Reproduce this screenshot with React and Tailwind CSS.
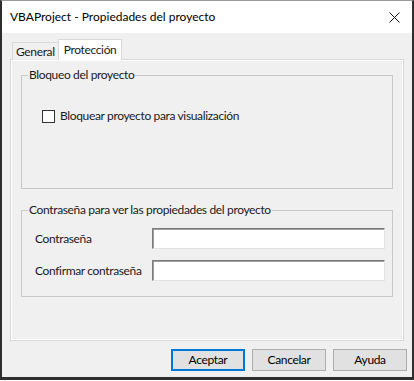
import React from 'react';

const font = { fontFamily: 'Lato, "Noto Sans", "Liberation Sans", sans-serif' };

const Field = ({ label }) => (
  <div className="flex items-center">
    <span className="w-[117px] ml-[7px] text-[12px] tracking-[-0.35px] whitespace-nowrap text-[#1a1a1a]">{label}</span>
    <div className="flex-1 mr-[1px] h-[21px] bg-white border border-t-[#7a7a7a] border-l-[#7a7a7a] border-r-[#e3e3e3] border-b-[#e3e3e3] shadow-[inset_1px_1px_0_#a0a0a0]" />
  </div>
);

const Button = ({ children, primary }) => (
  <button
    className={
      primary
        ? 'w-[74px] h-[22px] bg-[#e1e1e1] border-2 border-[#0078d7] text-[12px] tracking-[-0.35px] text-black'
        : 'w-[74px] h-[22px] bg-[#e1e1e1] border border-[#adadad] text-[12px] tracking-[-0.35px] text-black'
    }
  >
    {children}
  </button>
);

export default function App() {
  return (
    <div style={font} className="w-[414px] h-[381px] bg-white">
      <div className="w-[414px] h-[380px] flex flex-col border-x-2 border-b-[3px] border-t border-[#2e2e2e] border-t-[#9a9a9a] bg-[#f0f0f0]">
        {/* title bar */}
        <div className="h-[32px] bg-white flex items-center justify-between pl-[8px] pr-[12px]">
          <span className="text-[12px] text-black">VBAProject - Propiedades del proyecto</span>
          <svg width="11" height="11" viewBox="0 0 11 11">
            <path d="M0.5 0.5 L10.5 10.5 M10.5 0.5 L0.5 10.5" stroke="#111" strokeWidth="1" />
          </svg>
        </div>

        <div className="flex flex-col px-[8px] pt-[5px]">
          {/* tabs */}
          <div className="flex items-end h-[21px] pl-[2px] relative z-10">
            <div className="h-[18px] px-[3px] border border-b-0 border-[#d9d9d9] bg-[#f0f0f0] text-[12px] tracking-[-0.35px] leading-[17px] text-[#1a1a1a] -mb-[1px]">
              General
            </div>
            <div className="h-[21px] px-[5px] border border-b-0 border-[#d9d9d9] bg-white text-[12px] tracking-[-0.35px] leading-[19px] text-[#1a1a1a] -ml-[1px] -mb-[1px]">
              Protección
            </div>
          </div>

          {/* panel */}
          <div className="h-[282px] border border-[#d9d9d9] shadow-[inset_1px_1px_0_#fff,inset_-1px_-1px_0_#fff] bg-[#f0f0f0] px-[10px] pt-[7px] flex flex-col gap-[13px] text-[12px] tracking-[-0.35px] text-[#1a1a1a]">
            <fieldset className="border border-[#c9c9c9] px-[6px] h-[122px]">
              <legend className="px-[1px] leading-[16px]">Bloqueo del proyecto</legend>
              <label className="flex items-center gap-[5px] ml-[14px] mt-[24px]">
                <span className="w-[13px] h-[13px] bg-white border border-[#333]" />
                <span>Bloquear proyecto para visualización</span>
              </label>
            </fieldset>

            <fieldset className="border border-[#c9c9c9] px-[6px] pb-[15px]">
              <legend className="px-[1px] leading-[16px]">
                Contraseña para ver las propiedades del proyecto
              </legend>
              <div className="flex flex-col gap-[11px] mt-[10px]">
                <Field label="Contraseña" />
                <Field label="Confirmar contraseña" />
              </div>
            </fieldset>
          </div>

          {/* buttons */}
          <div className="flex justify-end gap-[7px] mt-[8px] -mr-[3px]">
            <Button primary>Aceptar</Button>
            <Button>Cancelar</Button>
            <Button>Ayuda</Button>
          </div>
        </div>
      </div>
    </div>
  );
}
